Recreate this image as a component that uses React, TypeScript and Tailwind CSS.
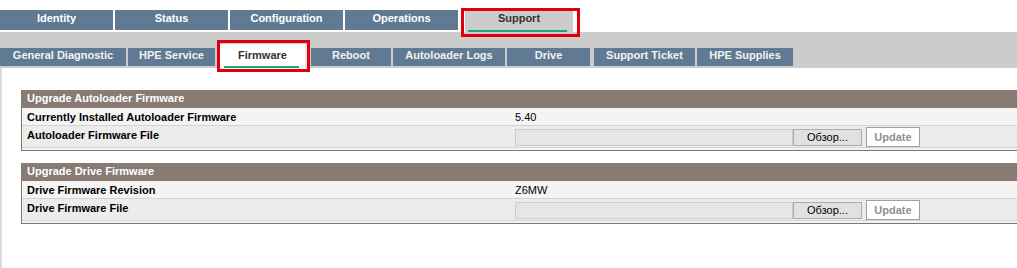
import React from 'react';

const topTabs = ['Identity', 'Status', 'Configuration', 'Operations'];

const subTabs: { label: string; w: string; ml: string }[] = [
  { label: 'Reboot', w: 'w-[80px]', ml: 'ml-[1px]' },
  { label: 'Autoloader Logs', w: 'w-[112px]', ml: 'ml-[2px]' },
  { label: 'Drive', w: 'w-[83px]', ml: 'ml-[2px]' },
  { label: 'Support Ticket', w: 'w-[101px]', ml: 'ml-[4px]' },
  { label: 'HPE Supplies', w: 'w-[96px]', ml: 'ml-[2px]' },
];

const FirmwareSection: React.FC<{ title: string; infoLabel: string; infoValue: string; fileLabel: string }> = ({
  title,
  infoLabel,
  infoValue,
  fileLabel,
}) => (
  <div className="border-l border-b border-[#807775]">
    <div className="h-[18px] bg-[#877b74] pl-[5px] text-[11px] font-bold leading-[17px] text-white">{title}</div>
    <div className="flex h-[18px] border-b border-[#d2d2d2] bg-[#f4f4f4] text-[11px] leading-[18px] text-black">
      <div className="w-[493px] pl-[5px] font-bold">{infoLabel}</div>
      <div>{infoValue}</div>
    </div>
    <div className="flex h-[22px] border-b border-[#d6d6d6] bg-[#ececec] text-[11px] text-black">
      <div className="w-[493px] pl-[5px] pt-[2px] font-bold leading-[14px]">{fileLabel}</div>
      <div className="flex items-center pt-[1px]">
        <div className="h-[17px] w-[278px] border border-[#cbcbcb] bg-[#e6e6e6]" />
        <button className="h-[17px] w-[69px] border border-[#adadad] bg-[#e1e1e1] text-center text-[11px] leading-[14px] text-black">
          Обзор...
        </button>
        <button className="ml-[4px] h-[20px] w-[54px] border border-[#a0a0a0] bg-white text-center text-[11px] font-bold leading-[17px] text-[#8f8f8f]">
          Update
        </button>
      </div>
    </div>
    <div className="h-[2px] bg-[#f3f1f1]" />
  </div>
);

export default function App() {
  return (
    <div className="min-h-[268px] bg-white font-['Liberation_Sans',Arial,sans-serif]">
      {/* main tabs */}
      <div className="flex h-[32px] pt-[10px]">
        {topTabs.map((t, i) => (
          <div
            key={t}
            className={`flex h-[20px] w-[113px] justify-center bg-[#5f7a92] pt-[1px] text-[11px] font-bold leading-[14px] text-white ${i > 0 ? 'ml-[2px]' : ''}`}
          >
            {t}
          </div>
        ))}
        <div className="relative ml-[3px] h-[22px] w-[119px]">
          <div className="ml-[4px] mt-[1px] flex h-[21px] w-[108px] justify-center bg-[#cccccc] text-[11px] font-bold leading-[14px] text-[#333333]">
            Support
          </div>
          <div className="absolute left-[7px] top-[20px] h-[2px] w-[99px] bg-[#1aa583]" />
          <div className="absolute left-0 top-[-2px] h-[29px] w-[119px] border-[3px] border-[#e0000d]" />
        </div>
      </div>

      {/* sub tabs */}
      <div className="h-[36px] bg-[#cccccc] pt-[12px]">
        <div className="flex h-[24px] items-start">
          <div className="mt-[4px] flex h-[18px] w-[126px] justify-center bg-[#5f7a92] text-[11px] font-bold leading-[14px] text-[#f2f2f2]">
            General Diagnostic
          </div>
          <div className="ml-[2px] mt-[4px] flex h-[18px] w-[87px] justify-center bg-[#5f7a92] text-[11px] font-bold leading-[14px] text-[#f2f2f2]">
            HPE Service
          </div>
          <div className="relative ml-[2px] h-[24px] w-[93px]">
            <div className="ml-[3px] flex h-[24px] w-[87px] justify-center border-r-2 border-[#e4e4e4] bg-white pt-[4px] text-[11px] font-bold leading-[14px] text-[#333333]">
              Firmware
            </div>
            <div className="absolute left-[7px] top-[22px] h-[2px] w-[75px] bg-[#1aa583]" />
            <div className="absolute left-0 top-[-4px] h-[32px] w-[93px] border-[3px] border-[#e0000d]" />
          </div>
          {subTabs.map((t) => (
            <div
              key={t.label}
              className={`mt-[4px] flex h-[18px] justify-center bg-[#5f7a92] text-[11px] font-bold leading-[14px] text-[#f2f2f2] ${t.w} ${t.ml}`}
            >
              {t.label}
            </div>
          ))}
        </div>
      </div>

      {/* content */}
      <div className="h-[200px] border-l-2 border-[#dcdcdc] pl-[19px] pt-[22px]">
        <FirmwareSection
          title="Upgrade Autoloader Firmware"
          infoLabel="Currently Installed Autoloader Firmware"
          infoValue="5.40"
          fileLabel="Autoloader Firmware File"
        />
        <div className="h-[12px]" />
        <FirmwareSection
          title="Upgrade Drive Firmware"
          infoLabel="Drive Firmware Revision"
          infoValue="Z6MW"
          fileLabel="Drive Firmware File"
        />
      </div>
    </div>
  );
}
